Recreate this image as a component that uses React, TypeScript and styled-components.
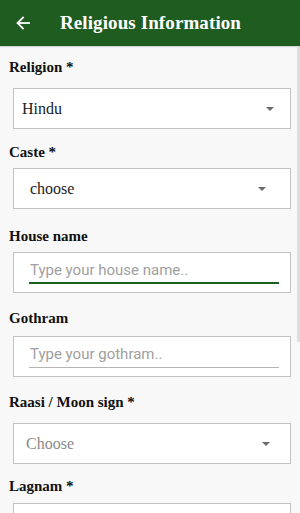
import React from "react";
import styled, { createGlobalStyle } from "styled-components";

const Global = createGlobalStyle`
  html, body { margin: 0; padding: 0; background: #f8f8f8; }
  body { font-family: "Liberation Serif", serif; overflow: hidden; }
`;

const Screen = styled.div`
  width: 300px;
  height: 513px;
  background: #f8f8f8;
  position: relative;
  overflow: hidden;
`;

const Header = styled.header`
  height: 46px;
  background: #1f5c1f;
  display: flex;
  align-items: center;
  padding-left: 16px;
  box-sizing: border-box;
  box-shadow: 0 1px 1px rgba(0,0,0,0.15);
`;

const BackBtn = styled.span`
  width: 14px;
  height: 14px;
  display: flex;
  margin-right: 30px;
`;

const Title = styled.h1`
  margin: 0;
  color: #fff;
  font-family: "Liberation Serif", serif;
  font-weight: 700;
  font-size: 19px;
  letter-spacing: 0.1px;
`;

const Form = styled.div`
  display: flex;
  flex-direction: column;
  padding: 0 9px;
`;

const Label = styled.div<{ $top: number }>`
  margin-top: ${(p) => p.$top}px;
  height: 20px;
  line-height: 20px;
  font-size: 15px;
  font-weight: 700;
  color: #111;
`;

const Box = styled.div<{ $gap: number; $pl: number; $pr: number }>`
  margin-top: ${(p) => p.$gap}px;
  margin-left: 4px;
  height: 41px;
  box-sizing: border-box;
  border: 1px solid #c2c2c2;
  background: #fff;
  display: flex;
  align-items: center;
  padding-left: ${(p) => p.$pl}px;
  padding-right: ${(p) => p.$pr}px;
`;

const Value = styled.span<{ $muted?: boolean }>`
  flex: 1;
  font-size: 16px;
  color: ${(p) => (p.$muted ? "#8a8a8a" : "#222")};
`;

const Caret = styled.span`
  width: 0;
  height: 0;
  border-left: 4px solid transparent;
  border-right: 4px solid transparent;
  border-top: 4px solid #6b6b6b;
`;

const Input = styled.div<{ $focused?: boolean }>`
  flex: 1;
  height: 26px;
  margin-top: -4px;
  box-sizing: border-box;
  border-bottom: ${(p) => (p.$focused ? "2px solid #1b5e20" : "1px solid #b5b5b5")};
  display: flex;
  align-items: center;
  font-family: Roboto, "Liberation Sans", sans-serif;
  font-size: 15px;
  color: #a0a0a0;
  padding-left: 1px;
`;

const Scrollbar = styled.div`
  position: absolute;
  right: 0;
  top: 47px;
  width: 3px;
  height: 295px;
  background: #dedede;
`;

function Select({ label, value, top, gap, pl, pr, muted }: {
  label: string; value: string; top: number; gap: number; pl: number; pr: number; muted?: boolean;
}) {
  return (
    <>
      <Label $top={top}>{label}</Label>
      <Box $gap={gap} $pl={pl} $pr={pr}>
        <Value $muted={muted}>{value}</Value>
        <Caret />
      </Box>
    </>
  );
}

function TextField({ label, placeholder, top, gap, focused }: {
  label: string; placeholder: string; top: number; gap: number; focused?: boolean;
}) {
  return (
    <>
      <Label $top={top}>{label}</Label>
      <Box $gap={gap} $pl={15} $pr={11}>
        <Input $focused={focused}>{placeholder}</Input>
      </Box>
    </>
  );
}

export default function App() {
  return (
    <Screen>
      <Global />
      <Header>
        <BackBtn>
          <svg width="14" height="14" viewBox="0 0 14 14" fill="none" stroke="#fff" strokeWidth="1.8" strokeLinecap="square">
            <path d="M13 7H2" />
            <path d="M7 1.5L1.5 7L7 12.5" />
          </svg>
        </BackBtn>
        <Title>Religious Information</Title>
      </Header>
      <Form>
        <Select label="Religion *" value="Hindu" top={11} gap={11} pl={8} pr={16} />
        <Select label="Caste *" value="choose" top={13} gap={6} pl={16} pr={24} />
        <TextField label="House name" placeholder="Type your house name.." top={17} gap={6} focused />
        <TextField label="Gothram" placeholder="Type your gothram.." top={15} gap={8} />
        <Select label="Raasi / Moon sign *" value="Choose" top={15} gap={11} pl={12} pr={20} muted />
        <Select label="Lagnam *" value="" top={12} gap={7} pl={12} pr={20} muted />
      </Form>
      <Scrollbar />
    </Screen>
  );
}
